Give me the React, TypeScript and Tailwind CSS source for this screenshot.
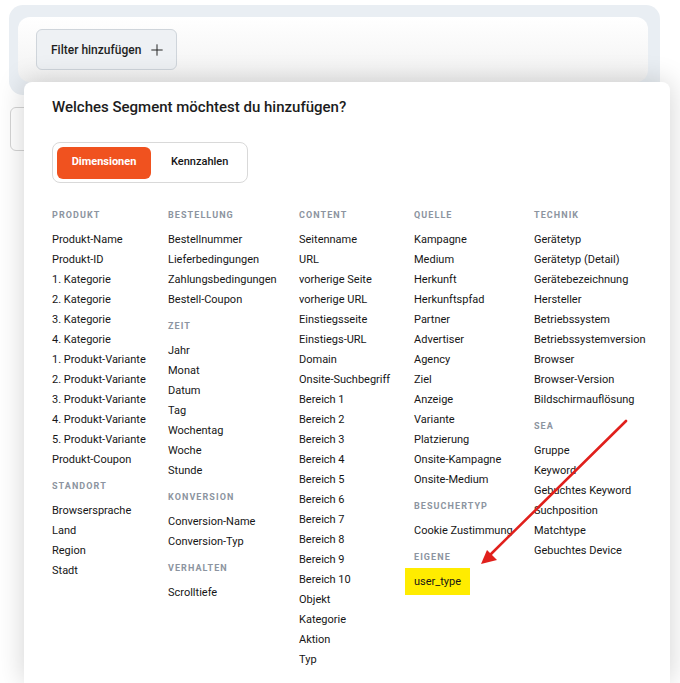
import { Plus } from "lucide-react";

type Section = { title: string; items: string[] };

const columns: Section[][] = [
  [
    {
      title: "Produkt",
      items: [
        "Produkt-Name",
        "Produkt-ID",
        "1. Kategorie",
        "2. Kategorie",
        "3. Kategorie",
        "4. Kategorie",
        "1. Produkt-Variante",
        "2. Produkt-Variante",
        "3. Produkt-Variante",
        "4. Produkt-Variante",
        "5. Produkt-Variante",
        "Produkt-Coupon",
      ],
    },
    { title: "Standort", items: ["Browsersprache", "Land", "Region", "Stadt"] },
  ],
  [
    {
      title: "Bestellung",
      items: ["Bestellnummer", "Lieferbedingungen", "Zahlungsbedingungen", "Bestell-Coupon"],
    },
    { title: "Zeit", items: ["Jahr", "Monat", "Datum", "Tag", "Wochentag", "Woche", "Stunde"] },
    { title: "Konversion", items: ["Conversion-Name", "Conversion-Typ"] },
    { title: "Verhalten", items: ["Scrolltiefe"] },
  ],
  [
    {
      title: "Content",
      items: [
        "Seitenname",
        "URL",
        "vorherige Seite",
        "vorherige URL",
        "Einstiegsseite",
        "Einstiegs-URL",
        "Domain",
        "Onsite-Suchbegriff",
        "Bereich 1",
        "Bereich 2",
        "Bereich 3",
        "Bereich 4",
        "Bereich 5",
        "Bereich 6",
        "Bereich 7",
        "Bereich 8",
        "Bereich 9",
        "Bereich 10",
        "Objekt",
        "Kategorie",
        "Aktion",
        "Typ",
      ],
    },
  ],
  [
    {
      title: "Quelle",
      items: [
        "Kampagne",
        "Medium",
        "Herkunft",
        "Herkunftspfad",
        "Partner",
        "Advertiser",
        "Agency",
        "Ziel",
        "Anzeige",
        "Variante",
        "Platzierung",
        "Onsite-Kampagne",
        "Onsite-Medium",
      ],
    },
    { title: "Besuchertyp", items: ["Cookie Zustimmung"] },
    { title: "Eigene", items: ["user_type"] },
  ],
  [
    {
      title: "Technik",
      items: [
        "Gerätetyp",
        "Gerätetyp (Detail)",
        "Gerätebezeichnung",
        "Hersteller",
        "Betriebssystem",
        "Betriebssystemversion",
        "Browser",
        "Browser-Version",
        "Bildschirmauflösung",
      ],
    },
    {
      title: "SEA",
      items: ["Gruppe", "Keyword", "Gebuchtes Keyword", "Suchposition", "Matchtype", "Gebuchtes Device"],
    },
  ],
];

export default function App() {
  return (
    <div
      className="relative h-[683px] w-[680px] overflow-hidden bg-white text-[#161616]"
      style={{ fontFamily: "Roboto, 'Noto Sans', sans-serif" }}
    >
      {/* Filter bar */}
      <div className="mx-[9px] mt-[5px] w-[651px] rounded-[14px] bg-[#e9eef3] px-[9px] pb-[13px] pt-[12px]">
        <div className="flex h-[65px] w-[630px] items-start rounded-[12px] bg-gradient-to-b from-white to-[#f2f2f2] px-[18px] pt-[12px]">
          <button className="flex h-[41px] items-center gap-[7px] rounded-[6px] border border-[#cfd5db] bg-[#eef1f4] pl-[14px] pr-[10px] text-[12px] font-medium text-[#1f1f1f]">
            Filter hinzufügen
            <Plus size={18} strokeWidth={1.3} />
          </button>
        </div>
      </div>
      <div className="ml-[10px] mt-[12px] h-[44px] w-[200px] rounded-[6px] border border-[#d4d4d4] bg-white" />

      {/* Popover */}
      <div className="absolute bottom-0 left-[24px] top-[82px] w-[646px] rounded-t-[8px] bg-white pl-[28px] pt-[15px] shadow-[0_0_28px_rgba(0,0,0,0.18)]">
        <h2 className="text-[15px] font-medium leading-[20px] text-[#1c1c1c]">
          Welches Segment möchtest du hinzufügen?
        </h2>
        <div className="mt-[25px] inline-flex h-[41px] items-center rounded-[8px] border border-[#d9d9d9] p-[4px]">
          <div className="flex h-[32px] w-[94px] items-center justify-center rounded-[6px] bg-[#f0521f] text-[11px] font-bold text-white">
            Dimensionen
          </div>
          <div className="flex h-[32px] items-center pl-[20px] pr-[15px] text-[11px] font-medium">
            Kennzahlen
          </div>
        </div>

        <div className="mt-[16px] grid grid-cols-[116px_131px_115px_120px_1fr]">
          {columns.map((col, ci) => (
            <div key={ci} className="flex flex-col">
              {col.map((sec) => (
                <div key={sec.title}>
                  <div className="mb-[5px] mt-[6px] h-[20px] text-[9px] font-bold uppercase leading-[20px] tracking-[0.12em] text-[#8c94a0]">
                    {sec.title}
                  </div>
                  {sec.items.map((it) => (
                    <div key={it} className="h-[20px] text-[11px] leading-[20px]">
                      {it === "user_type" ? (
                        <span className="-mx-[9px] -my-[4px] inline-block bg-[#ffec00] px-[9px] py-[4px] leading-[19px]">
                          {it}
                        </span>
                      ) : (
                        it
                      )}
                    </div>
                  ))}
                </div>
              ))}
            </div>
          ))}
        </div>
      </div>

      {/* Red annotation arrow */}
      <svg className="pointer-events-none absolute left-0 top-0" width="680" height="683" viewBox="0 0 680 683">
        <line x1="626" y1="421" x2="490" y2="555" stroke="#e0201c" strokeWidth="2.6" strokeLinecap="round" />
        <polygon points="481,564 487,550 497,560" fill="#e0201c" />
      </svg>
    </div>
  );
}
